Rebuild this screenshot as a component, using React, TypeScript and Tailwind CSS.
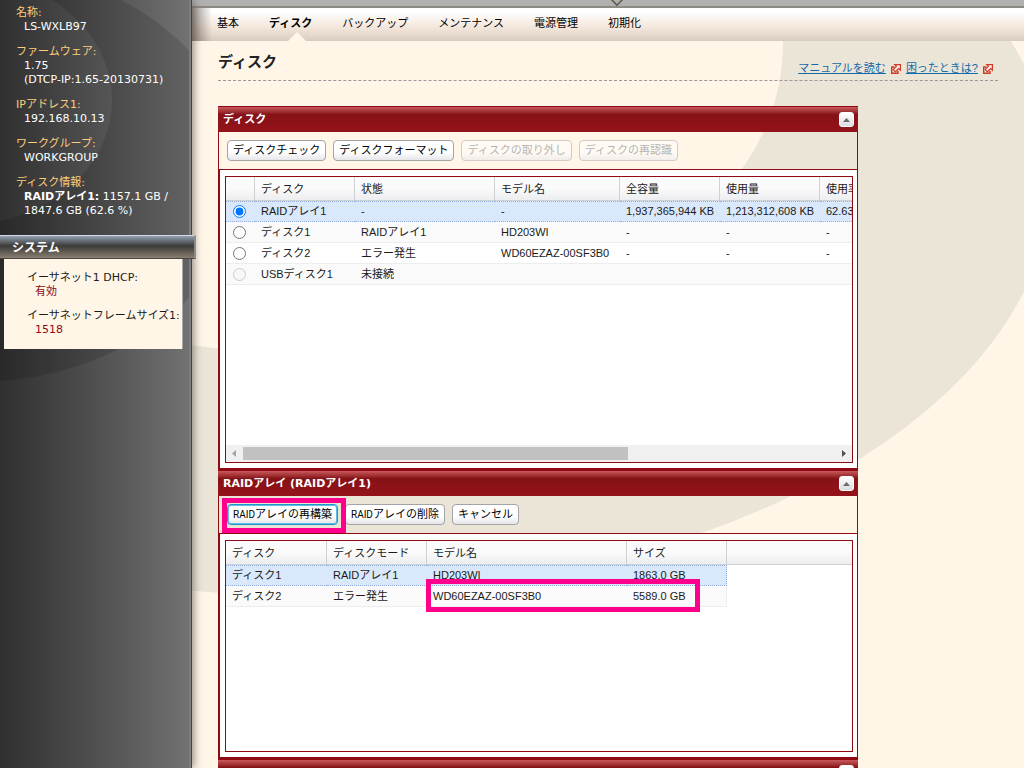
import { useState, type ReactNode } from 'react';
import clsx from 'clsx';

const NAV_ITEMS = ['基本', 'ディスク', 'バックアップ', 'メンテナンス', '電源管理', '初期化'];

const SYSTEM_INFO = [
  { label: '名称:', lines: ['LS-WXLB97'] },
  { label: 'ファームウェア:', lines: ['1.75', '(DTCP-IP:1.65-20130731)'] },
  { label: 'IPアドレス1:', lines: ['192.168.10.13'] },
  { label: 'ワークグループ:', lines: ['WORKGROUP'] },
];

const DISKS = [
  { name: 'RAIDアレイ1', status: '-', model: '-', total: '1,937,365,944 KB', used: '1,213,312,608 KB', rate: '62.63 %' },
  { name: 'ディスク1', status: 'RAIDアレイ1', model: 'HD203WI', total: '-', used: '-', rate: '-' },
  { name: 'ディスク2', status: 'エラー発生', model: 'WD60EZAZ-00SF3B0', total: '-', used: '-', rate: '-' },
  { name: 'USBディスク1', status: '未接続', model: '', total: '', used: '', rate: '', disabled: true },
];

const MEMBERS = [
  { name: 'ディスク1', mode: 'RAIDアレイ1', model: 'HD203WI', size: '1863.0 GB' },
  { name: 'ディスク2', mode: 'エラー発生', model: 'WD60EZAZ-00SF3B0', size: '5589.0 GB' },
];

function ExternalIcon() {
  return (
    <svg width="10" height="10" viewBox="0 0 10 10" fill="none" stroke="#cf3a26" className="mx-[5px] shrink-0">
      <path d="M3.5 3H.7v6.3H7V7" strokeWidth="1.4" />
      <path d="M3.8.6h5.6v5.6L7.7 4.6 4.4 7.8 2.2 5.6 5.4 2.3z" fill="#fbeee4" strokeWidth="1.2" />
    </svg>
  );
}

function ToolButton({ children, disabled, focused }: { children: ReactNode; disabled?: boolean; focused?: boolean }) {
  return (
    <button
      type="button"
      disabled={disabled}
      className={clsx(
        'h-[21px] px-[5px] rounded border bg-linear-to-b from-white from-60% to-[#e6e6ea] leading-[19px] whitespace-nowrap text-black',
        focused ? 'border-[#1e96c8] shadow-[inset_0_0_0_1px_#5fbfe6]' : 'border-[#a3a3a8]',
        disabled && 'opacity-50 text-gray-500'
      )}
    >
      {children}
    </button>
  );
}

function Panel({ title, toolbar, children }: { title: string; toolbar?: ReactNode; children?: ReactNode }) {
  return (
    <section className="w-full max-w-[640px] shrink-0 border-x border-b-2 border-[#8f0a12]">
      <header className="-mx-px h-[26px] pl-[5px] pr-1 flex items-center justify-between border-t border-[#8f0a12] bg-linear-to-b from-[#c9585c] via-[#861217] via-30% to-[#94131a]">
        <h2 className="pt-[2px] font-bold text-white font-['DejaVu_Sans','Noto_Sans_CJK_JP',sans-serif]">{title}</h2>
        <button
          type="button"
          aria-label="折りたたむ"
          className="w-[15px] h-[15px] flex items-center justify-center rounded-[3px] border border-white bg-linear-to-b from-white to-[#dcdcdc]"
        >
          <svg width="7" height="4" viewBox="0 0 7 4" fill="#6b6b6b">
            <path d="M3.5 0 7 4H0z" />
          </svg>
        </button>
      </header>
      {toolbar && <div className="h-[37px] px-2 flex items-center gap-[7px]">{toolbar}</div>}
      {children && <div className="border-t border-l border-[#8f0a12] bg-white pt-[6px] pb-[5px] pl-[5px] pr-1">{children}</div>}
    </section>
  );
}

const TH = 'h-6 pt-[2px] pl-[6px] border-r border-r-[#d0d0d0] border-b border-b-[#d0d0d0] text-left font-normal';
const HEAD = 'bg-linear-to-b from-[#fbfbfb] from-45% to-[#ebecee]';

function cellClass(selected: boolean, index: number) {
  return clsx(
    'h-[21px] pl-[6px] whitespace-nowrap',
    selected
      ? 'bg-[#d9e8fb] border-y border-dotted border-[#93b0e0]'
      : clsx('border-b border-[#ededed]', index % 2 ? 'bg-[#fafafa]' : 'bg-white')
  );
}

function Sidebar() {
  return (
    <aside className="relative z-10 w-48 shrink-0 border-r border-[#444] bg-linear-to-r from-[#303030] to-[#727272] shadow-[2px_0_8px_rgba(80,70,60,0.6)] font-['DejaVu_Sans','Noto_Sans_CJK_JP',sans-serif] leading-[14px]">
      <svg className="absolute inset-0 w-full h-[400px]" viewBox="0 0 191 400" preserveAspectRatio="xMinYMin slice">
        <path
          fillRule="evenodd"
          fill="#000"
          fillOpacity="0.13"
          d="M-291 174a266 208 0 1 0 532 0a266 208 0 1 0-532 0zM-192 100a152 126 0 1 0 304 0a152 126 0 1 0-304 0z"
        />
      </svg>
      <div className="absolute inset-y-0 right-0 w-[2px] bg-[#7d7d7d]" />

      {/* 本体情報 */}
      <dl className="relative h-[235px] pt-[6px] pl-4 flex flex-col gap-[11px] text-white">
        {SYSTEM_INFO.map((item) => (
          <div key={item.label}>
            <dt className="text-[#ffce7b]">{item.label}</dt>
            {item.lines.map((line) => (
              <dd key={line} className="pl-2 whitespace-nowrap">{line}</dd>
            ))}
          </div>
        ))}
        <div>
          <dt className="text-[#ffce7b]">ディスク情報:</dt>
          <dd className="pl-2 whitespace-nowrap">
            <b>RAIDアレイ1:</b> 1157.1 GB /<br />
            1847.6 GB (62.6 %)
          </dd>
        </div>
      </dl>

      {/* システム */}
      <h2 className="relative h-6 -mr-[5px] pt-[2px] pl-3 flex items-center border-t border-t-[#d5d6e6] border-r-2 border-r-[#8e8a88] border-b border-b-[#4a4540] bg-linear-to-b from-[#93a2b4] via-[#3c3b38] via-45% to-[#8a7e70] text-xs font-bold text-white">
        システム
      </h2>
      <dl className="relative ml-1 mr-2 h-[90px] pt-3 pl-[23px] flex flex-col gap-[10px] bg-[#fff6e8] border-r border-[#aaa] whitespace-nowrap">
        <div>
          <dt>イーサネット1 DHCP:</dt>
          <dd className="pl-2 text-[#8f0a12]">有効</dd>
        </div>
        <div>
          <dt>イーサネットフレームサイズ1:</dt>
          <dd className="pl-2 text-[#8f0a12]">1518</dd>
        </div>
      </dl>
    </aside>
  );
}

export default function App() {
  const [selectedDisk, setSelectedDisk] = useState(0);

  return (
    <div className="h-screen flex overflow-hidden bg-[#fff6e8] text-[11px] text-[#1a1a1a] font-['Liberation_Sans','Noto_Sans_CJK_JP',sans-serif]">
      <Sidebar />

      <div className="relative flex-1 min-w-0 flex flex-col">
        <svg className="absolute top-0 left-0" width="860" height="620" viewBox="192 0 860 620">
          <path
            fillRule="evenodd"
            fill="#ebe5d8"
            d="M-432 178a742 418 0 1 0 1484 0a742 418 0 1 0-1484 0zM-183 45a483 308 0 1 0 966 0a483 308 0 1 0-966 0z"
          />
        </svg>

        {/* 上部バー */}
        <div className="relative h-2 shrink-0 flex justify-center border-b-2 border-[#8d8983] bg-[#b1b1b1]">
          <svg width="16" height="8" viewBox="0 0 16 8" className="mr-[-18px]" fill="#b5aea8" stroke="#57504c" strokeWidth="1.4">
            <path d="M2 -1 8 5.2 14 -1" />
          </svg>
        </div>

        {/* メインメニュー */}
        <nav className="relative h-[33px] shrink-0 pl-[25px] flex gap-[30px] bg-linear-to-b from-white from-10% via-[#f3e6db] via-60% to-[#d8ccc0]">
          <div className="absolute inset-y-0 left-0 w-5 bg-linear-to-r from-[#5c4f4a]/60 to-transparent" />
          {NAV_ITEMS.map((item) => (
            <a
              key={item}
              href="#"
              className={clsx('relative h-[30px] flex items-center justify-center text-black', item === 'ディスク' && 'font-bold')}
            >
              {item}
              {item === 'ディスク' && (
                <svg width="18" height="9" viewBox="0 0 18 9" className="absolute -bottom-[3px] translate-x-1.5" fill="#fff6e8">
                  <path d="M9 0 18 9H0z" />
                </svg>
              )}
            </a>
          ))}
        </nav>

        <main className="relative px-[26px] flex flex-col">
          <div className="h-10 mb-[25px] flex items-center justify-between border-b border-dashed border-[#999]">
            <h1 className="pt-1 text-[15px] font-bold text-[#222]">ディスク</h1>
            <div className="pt-4 flex items-center text-[#1469a8]">
              <a href="#" className="underline">マニュアルを読む</a>
              <ExternalIcon />
              <a href="#" className="underline">困ったときは?</a>
              <ExternalIcon />
            </div>
          </div>

          <Panel
            title="ディスク"
            toolbar={
              <>
                <ToolButton>ディスクチェック</ToolButton>
                <ToolButton>ディスクフォーマット</ToolButton>
                <ToolButton disabled>ディスクの取り外し</ToolButton>
                <ToolButton disabled>ディスクの再認識</ToolButton>
              </>
            }
          >
            <div className="h-[287px] flex flex-col justify-between border border-[#8f0a12]">
              <div className="overflow-hidden">
                <table className="w-[1010px] table-fixed border-separate border-spacing-0">
                  <thead className={HEAD}>
                    <tr>
                      <th className={clsx(TH, 'w-[29px]')} aria-label="選択"></th>
                      <th className={clsx(TH, 'w-[100px]')}>ディスク</th>
                      <th className={clsx(TH, 'w-[140px]')}>状態</th>
                      <th className={clsx(TH, 'w-[125px]')}>モデル名</th>
                      <th className={clsx(TH, 'w-[100px]')}>全容量</th>
                      <th className={clsx(TH, 'w-[100px]')}>使用量</th>
                      <th className={TH}>使用率</th>
                    </tr>
                  </thead>
                  <tbody>
                    {DISKS.map((disk, i) => {
                      const cell = cellClass(i === selectedDisk, i);
                      return (
                        <tr key={disk.name}>
                          <td className={cell}>
                            <input
                              type="radio"
                              name="disk"
                              aria-label={disk.name}
                              disabled={disk.disabled}
                              checked={i === selectedDisk}
                              onChange={() => setSelectedDisk(i)}
                              className="block ml-px w-[13px] h-[13px]"
                            />
                          </td>
                          <td className={cell}>{disk.name}</td>
                          <td className={cell}>{disk.status}</td>
                          <td className={cell}>{disk.model}</td>
                          <td className={cell}>{disk.total}</td>
                          <td className={cell}>{disk.used}</td>
                          <td className={cell}>{disk.rate}</td>
                        </tr>
                      );
                    })}
                  </tbody>
                </table>
              </div>

              {/* 横スクロールバー */}
              <div className="h-[17px] shrink-0 px-[6px] flex items-center bg-[#f0f0f0]">
                <svg width="4" height="7" viewBox="0 0 4 7" fill="#a3a3a3"><path d="M4 0v7L0 3.5z" /></svg>
                <div className="flex-1 mx-[7px]">
                  <div className="w-[65%] h-[13px] bg-[#c1c1c1]" />
                </div>
                <svg width="4" height="7" viewBox="0 0 4 7" fill="#505050"><path d="M0 0v7l4-3.5z" /></svg>
              </div>
            </div>
          </Panel>

          <Panel
            title="RAIDアレイ (RAIDアレイ1)"
            toolbar={
              <>
                <div className="relative flex">
                  <ToolButton focused><span className="text-[10px] font-['Roboto',sans-serif]">RAID</span>アレイの再構築</ToolButton>
                  <div className="absolute -left-[5px] -top-[6px] z-10 w-[124px] h-[35px] border-5 border-[#ff008c] pointer-events-none" />
                </div>
                <ToolButton><span className="text-[10px] font-['Roboto',sans-serif]">RAID</span>アレイの削除</ToolButton>
                <ToolButton>キャンセル</ToolButton>
              </>
            }
          >
            <div className="relative h-[212px] border border-[#8f0a12]">
              <table className="w-full table-fixed border-separate border-spacing-0">
                <thead className={HEAD}>
                  <tr>
                    <th className={clsx(TH, 'w-[101px]')}>ディスク</th>
                    <th className={clsx(TH, 'w-[100px]')}>ディスクモード</th>
                    <th className={clsx(TH, 'w-[200px]')}>モデル名</th>
                    <th className={clsx(TH, 'w-[100px]')}>サイズ</th>
                    <th className="border-b border-[#d0d0d0]" aria-hidden="true"></th>
                  </tr>
                </thead>
                <tbody>
                  {MEMBERS.map((member, i) => {
                    const cell = cellClass(i === 0, i);
                    return (
                      <tr key={member.name}>
                        <td className={cell}>{member.name}</td>
                        <td className={cell}>{member.mode}</td>
                        <td className={cell}>{member.model}</td>
                        <td className={clsx(cell, 'border-r')}>{member.size}</td>
                      </tr>
                    );
                  })}
                </tbody>
              </table>
              <div className="absolute left-[200px] top-[38px] w-[274px] h-[33px] border-5 border-[#ff008c] pointer-events-none" />
            </div>
          </Panel>

          <Panel title="" />
        </main>
      </div>
    </div>
  );
}
